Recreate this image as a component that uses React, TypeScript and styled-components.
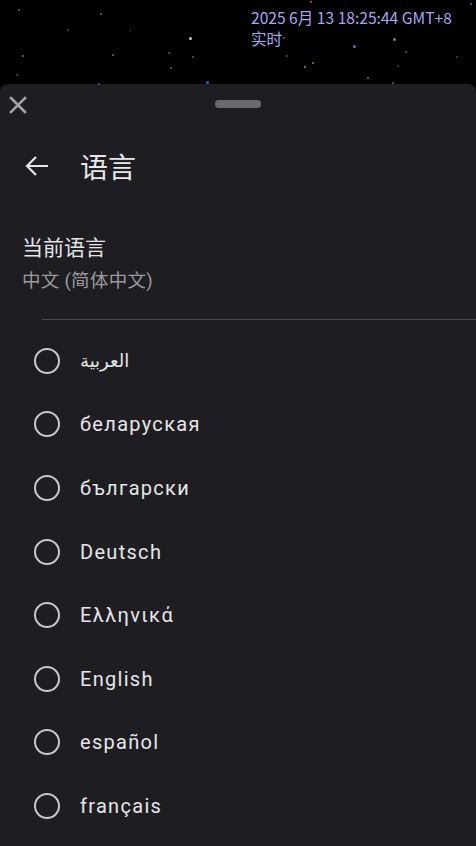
import React from "react";
import styled, { createGlobalStyle } from "styled-components";

const Global = createGlobalStyle`
  html, body { margin: 0; padding: 0; background: #000; }
  body { font-family: Roboto, "Noto Sans CJK SC", "DejaVu Sans", sans-serif; }
  #root { width: 476px; height: 846px; overflow: hidden; }
`;

const Page = styled.div`
  width: 476px;
  height: 846px;
  display: flex;
  flex-direction: column;
  background: #000;
`;

const Sky = styled.div`
  position: relative;
  height: 84px;
  flex-shrink: 0;
  display: flex;
  justify-content: flex-end;
`;

const Star = styled.span<{ $c: string; $s: number }>`
  position: absolute;
  width: ${(p) => p.$s}px;
  height: ${(p) => p.$s}px;
  border-radius: 50%;
  background: ${(p) => p.$c};
`;

const Clock = styled.div`
  position: relative;
  width: 225px;
  padding-top: 7px;
  font-family: "Noto Sans CJK SC", "Noto Sans", sans-serif;
  font-size: 15.6px;
  line-height: 21px;
  color: #a8a6f2;
`;

const Sheet = styled.div`
  flex: 1;
  background: #1e1e22;
  border-radius: 8px 8px 0 0;
  display: flex;
  flex-direction: column;
`;

const TopBar = styled.div`
  height: 54px;
  position: relative;
  display: flex;
  justify-content: center;
`;

const Close = styled.div`
  position: absolute;
  left: 8px;
  top: 11px;
`;

const Handle = styled.div`
  margin-top: 16px;
  width: 46px;
  height: 8px;
  border-radius: 4px;
  background: #6a6a6c;
`;

const TitleRow = styled.div`
  height: 56px;
  display: flex;
  align-items: center;
  padding-left: 24px;
  gap: 30px;
`;

const Title = styled.div`
  font-size: 28px;
  color: #e8e8ea;
  font-family: "Noto Sans CJK SC", sans-serif;
`;

const Current = styled.div`
  padding: 38px 0 0 22px;
  display: flex;
  flex-direction: column;
  gap: 8px;
`;

const Label = styled.div`
  font-size: 21px;
  line-height: 28px;
  color: #e4e4e6;
  font-family: "Noto Sans CJK SC", sans-serif;
`;

const Sub = styled.div`
  font-size: 18.5px;
  line-height: 26px;
  letter-spacing: 0.3px;
  color: #9a9a9e;
  font-family: Roboto, "Noto Sans CJK SC", sans-serif;
`;

const Divider = styled.div`
  margin: 25px 0 0 42px;
  height: 1px;
  background: #4a4a4e;
`;

const List = styled.div`
  padding-top: 9px;
  display: flex;
  flex-direction: column;
`;

const Row = styled.div`
  height: 63.6px;
  display: flex;
  align-items: center;
  padding-left: 34px;
  gap: 20px;
`;

const Radio = styled.span`
  width: 26px;
  height: 26px;
  box-sizing: border-box;
  border: 2.5px solid #c9c9cd;
  border-radius: 50%;
`;

const Name = styled.span<{ $small?: boolean }>`
  font-size: ${(p) => (p.$small ? "18px" : "20px")};
  color: #e6e6e8;
  letter-spacing: ${(p) => (p.$small ? "0" : "1.3px")};
`;

const stars: [number, number, number, string][] = [
  [18, 9, 2, "#6b5a40"], [100, 13, 2, "#7a6040"], [67, 29, 2, "#3a4a7a"],
  [22, 55, 2, "#a0703a"], [112, 54, 2, "#8a6a4a"], [189, 37, 3, "#d0c8b0"],
  [168, 52, 2, "#5a5a5a"], [192, 56, 2, "#4a5aa0"], [170, 67, 2, "#6a5a4a"],
  [206, 81, 3, "#4060c0"], [16, 74, 2, "#5a4a3a"], [310, 1, 2, "#a07040"],
  [283, 37, 2, "#6a5a40"], [353, 45, 3, "#6070c0"], [286, 55, 2, "#4a4a6a"],
  [304, 66, 2, "#8a8a8a"], [312, 62, 2, "#a07040"], [393, 38, 3, "#9a7a50"],
  [405, 51, 2, "#5a5a5a"], [397, 65, 2, "#5a4a3a"], [367, 77, 2, "#a07040"],
  [392, 82, 2, "#6a5a40"], [456, 56, 2, "#5a4a3a"], [470, 3, 2, "#4a5aa0"],
  [98, 83, 2, "#4060a0"], [130, 30, 1, "#5a5a5a"],
];

const langs = [
  "العربية",
  "беларуская",
  "български",
  "Deutsch",
  "Ελληνικά",
  "English",
  "español",
  "français",
];

export default function App() {
  return (
    <Page>
      <Global />
      <Sky>
        {stars.map(([x, y, s, c], i) => (
          <Star key={i} $c={c} $s={s} style={{ left: x, top: y }} />
        ))}
        <Clock>
          2025 6月 13 18:25:44 GMT+8
          <br />
          实时
        </Clock>
      </Sky>
      <Sheet>
        <TopBar>
          <Close>
            <svg width="20" height="20" viewBox="0 0 20 20">
              <path d="M3 3 L17 17 M17 3 L3 17" stroke="#a4a4a8" strokeWidth="2.6" strokeLinecap="square" />
            </svg>
          </Close>
          <Handle />
        </TopBar>
        <TitleRow>
          <svg width="26" height="24" viewBox="0 0 26 24">
            <path d="M24 12 H3 M12 3 L3 12 L12 21" stroke="#e6e6e8" strokeWidth="2.2" fill="none" />
          </svg>
          <Title>语言</Title>
        </TitleRow>
        <Current>
          <Label>当前语言</Label>
          <Sub>中文 (简体中文)</Sub>
        </Current>
        <Divider />
        <List>
          {langs.map((l, i) => (
            <Row key={l}>
              <Radio />
              <Name $small={i === 0}>{l}</Name>
            </Row>
          ))}
        </List>
      </Sheet>
    </Page>
  );
}
